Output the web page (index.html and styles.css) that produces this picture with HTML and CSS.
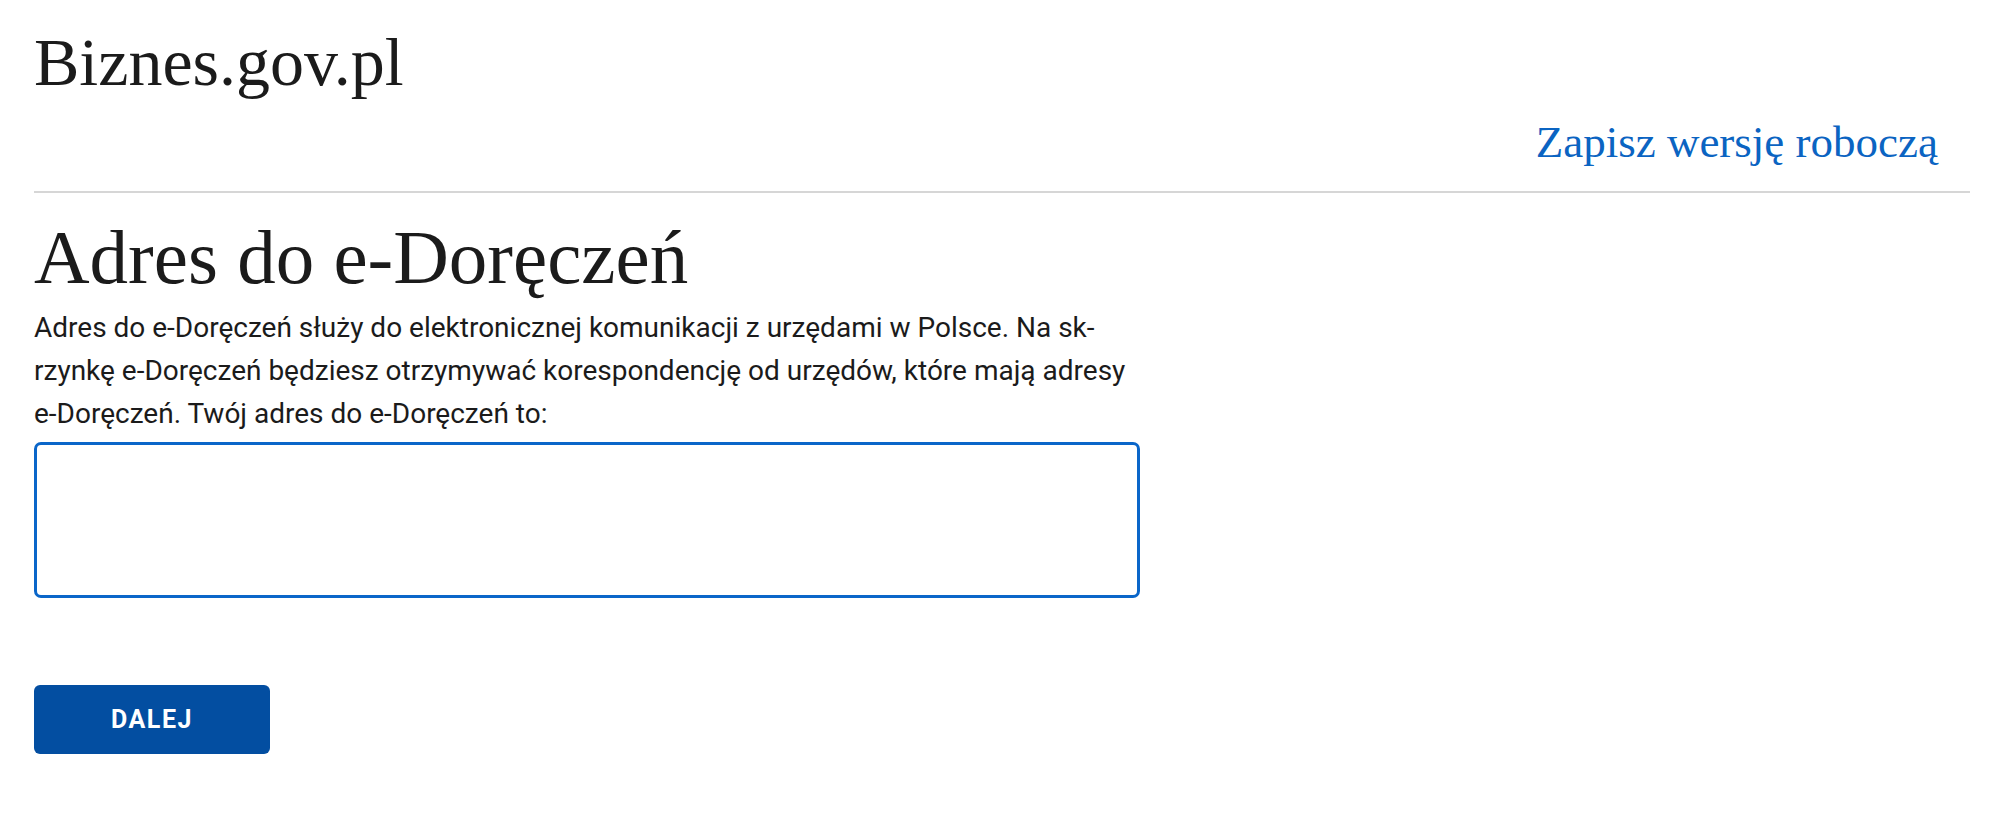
FILE: index.html
```html
<!DOCTYPE html>
<html lang="pl">
<head>
<meta charset="utf-8">
<title>Adres do e-Doręczeń</title>
<link rel="stylesheet" href="styles.css">
</head>
<body>
<div class="page">
  <header class="header">
    <div class="logo">Biznes.gov.pl</div>
    <div class="header-actions">
      <a class="draft-link" href="#">Zapisz wersję roboczą</a>
    </div>
  </header>
  <main class="content">
    <h1 class="title">Adres do e-Doręczeń</h1>
    <p class="lead">Adres do e-Doręczeń służy do elektronicznej komunikacji z urzędami w Polsce. Na sk&shy;rzynkę e-Doręczeń będziesz otrzymywać korespondencję od urzędów, które mają adresy e-Doręczeń. Twój adres do e-Doręczeń to:</p>
    <div class="address-box"></div>
    <div class="actions">
      <button class="btn-primary" type="button">DALEJ</button>
    </div>
  </main>
</div>
</body>
</html>
```

FILE: styles.css
```css
html, body {
  margin: 0;
  padding: 0;
  background: #ffffff;
}

.page {
  padding: 0 29px 0 34px;
  color: #1b1b1b;
}

.header {
  padding-top: 22px;
  padding-bottom: 24px;
  border-bottom: 2px solid #d6d6d6;
  display: flex;
  flex-direction: column;
}

.logo {
  font-family: "Liberation Serif", serif;
  font-size: 68px;
  line-height: 80px;
  height: 80px;
  color: #1b1b1b;
}

.header-actions {
  display: flex;
  justify-content: flex-end;
  margin-top: 15px;
  padding-right: 32px;
}

.draft-link {
  font-family: "Liberation Serif", serif;
  font-size: 45px;
  line-height: 50px;
  color: #0b64c2;
  text-decoration: none;
}

.content {
  padding-top: 21px;
}

.title {
  margin: 0;
  font-family: "Liberation Serif", serif;
  font-weight: normal;
  font-size: 77px;
  line-height: 86px;
  color: #1b1b1b;
}

.lead {
  margin: 6px 0 0;
  width: 1106px;
  font-family: Roboto, "Liberation Sans", sans-serif;
  font-size: 28px;
  line-height: 43px;
  color: #1b1b1b;
  hyphens: manual;
}

.address-box {
  margin-top: 7px;
  width: 1106px;
  height: 156px;
  box-sizing: border-box;
  border: 3px solid #0a66c9;
  border-radius: 7px;
}

.actions {
  margin-top: 87px;
  display: flex;
}

.btn-primary {
  width: 236px;
  height: 69px;
  border: none;
  border-radius: 6px;
  background: #034ea1;
  color: #ffffff;
  font-family: Roboto, "Liberation Sans", sans-serif;
  font-weight: bold;
  font-size: 25px;
  letter-spacing: 1.5px;
  cursor: pointer;
  padding: 0;
}
```
